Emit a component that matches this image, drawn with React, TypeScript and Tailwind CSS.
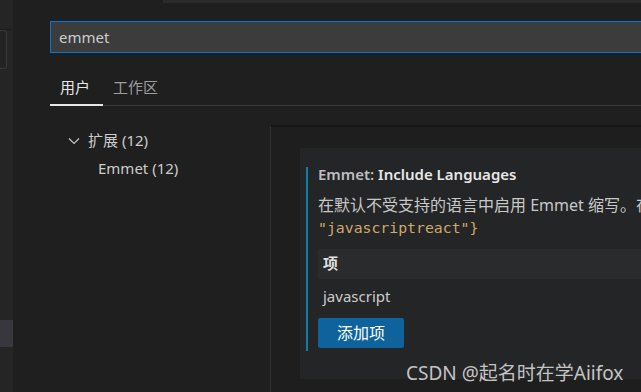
import React from "react";

const ui = { fontFamily: '"Noto Sans", "Noto Sans CJK SC", sans-serif' };
const mono = { fontFamily: '"DejaVu Sans Mono", "Liberation Mono", monospace' };

const ChevronDown = () => (
  <svg width="12" height="8" viewBox="0 0 12 8" fill="none">
    <path d="M1 1.5 L6 6.5 L11 1.5" stroke="#c5c5c5" strokeWidth="1.2" />
  </svg>
);

export default function App() {
  return (
    <div className="relative flex h-[392px] w-[641px] overflow-hidden bg-[#1f1f1f] text-[#cccccc]" style={ui}>
      {/* activity strip on the left edge */}
      <div className="flex w-[13px] flex-col bg-[#252525]">
        <div className="h-[30px] border-b border-[#1c1c1c]" />
        <div className="h-[39px] w-[7px] rounded-r-[3px] border border-l-0 border-[#383838] bg-[#232323]" />
        <div className="h-[251px]" />
        <div className="h-[27px] bg-[#37373d]" />
      </div>

      <div className="flex min-w-0 flex-1 flex-col">
        {/* top edge bar */}
        <div className="flex h-[3px]">
          <div className="w-[150px]" />
          <div className="flex-1 bg-[#2b2b2b]" />
        </div>

        {/* search box */}
        <div className="mt-[18px] ml-[37px] -mr-[4px] flex h-[32px] items-center border border-[#0078d4] bg-[#3c3c3c] pl-[8px] text-[15px] text-[#cccccc]">
          emmet
        </div>

        {/* tabs */}
        <div className="ml-[37px] mt-[23px] flex border-b border-[#3a3a3a] text-[15px]">
          <div className="-mb-px w-[53px] border-b-2 border-[#e7e7e7] pb-[5px] pl-[10px] text-[#e7e7e7]">用户</div>
          <div className="pb-[5px] pl-[10px] text-[#9d9d9d]">工作区</div>
        </div>

        <div className="mt-[19px] flex min-h-0 flex-1">
          {/* table of contents */}
          <div className="ml-[37px] w-[220px] shrink-0 pt-[4px] text-[15px]">
            <div className="flex h-[24px] items-center pl-[18px]">
              <ChevronDown />
              <span className="ml-[8px] text-[#cccccc]">扩展 (12)</span>
            </div>
            <div className="flex h-[32px] items-center pl-[48px] text-[#cccccc]">Emmet (12)</div>
          </div>

          {/* settings panel */}
          <div className="flex-1 border-l border-t-2 border-l-[#333333] border-t-[#161616] bg-[#1e1e1e] pl-[29px] pt-[21px]">
            <div className="h-[231px] bg-[#242526] pl-[6px] pt-[19px]">
              <div className="flex h-[184px] border-l-2 border-[#0f7ea6] pl-[10px]">
                <div className="flex min-w-0 flex-1 flex-col">
                  <div className="mt-[-4px] whitespace-nowrap text-[15px] font-semibold leading-[22px]">
                    <span className="text-[#bfbfbf]">Emmet: </span>
                    <span className="text-[#e7e7e7]">Include Languages</span>
                  </div>
                  <div className="mt-[9px] whitespace-nowrap text-[16px] leading-[22px] text-[#c8c8c8]">
                    在默认不受支持的语言中启用 Emmet 缩写。在
                  </div>
                  <div className="mt-[1px] whitespace-nowrap text-[14.8px] leading-[22px] text-[#cfa96b]" style={mono}>
                    "javascriptreact"{"}"}
                  </div>
                  <div className="mt-[10px] flex h-[30px] items-center bg-[#2a2b2c] pl-[5px] text-[15px] font-bold text-[#e0e0e0]">
                    项
                  </div>
                  <div className="flex h-[35px] items-center pl-[5px] text-[15px] text-[#cccccc]">javascript</div>
                  <div className="mt-[4px] flex h-[30px] w-[86px] items-center justify-center rounded-[2px] bg-[#0e639c] text-[16px] text-white">
                    添加项
                  </div>
                </div>
              </div>
            </div>
          </div>
        </div>
      </div>

      {/* watermark overlay */}
      <div className="absolute left-[406px] top-[360px] whitespace-nowrap text-[19px] leading-[26px] text-[#c4c4c4]">
        CSDN @起名时在学Aiifox
      </div>
    </div>
  );
}
